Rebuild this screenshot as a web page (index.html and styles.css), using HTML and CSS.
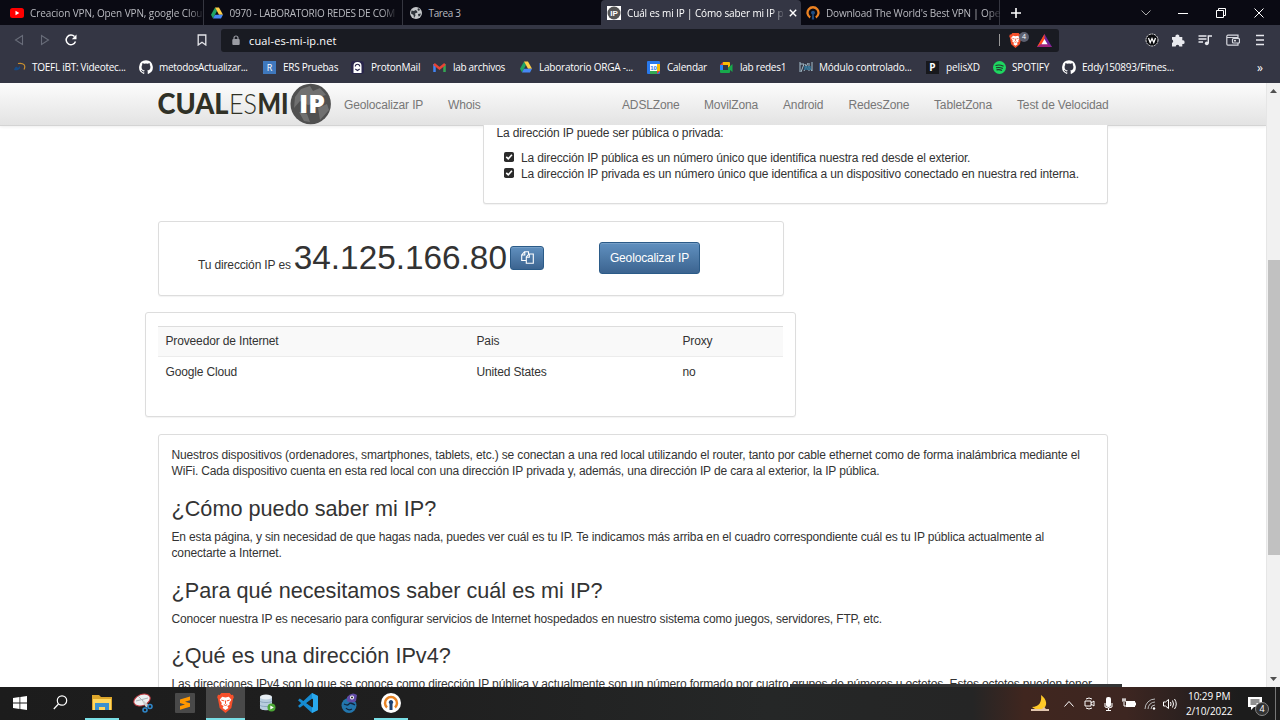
FILE: index.html
```html
<!DOCTYPE html>
<html lang="es">
<head>
<meta charset="utf-8">
<title>Cuál es mi IP</title>
<link rel="stylesheet" href="styles.css">
</head>
<body>
<svg width="0" height="0" class="defs">
  <defs>
    <symbol id="drive" viewBox="0 0 24 22"><path fill="#1fa463" d="M8 0 0 14.5 4 22 12 7z"/><path fill="#ffcf48" d="M8 0h8l8 14.5h-8z"/><path fill="#4688f4" d="M4 22h16l4-7.5H8z"/></symbol>
    <symbol id="github" viewBox="0 0 24 24"><path fill="#fff" d="M12 .5a12 12 0 0 0-3.8 23.3c.6.1.8-.2.8-.6v-2.100c-3.300.7-4-1.500-4-1.500-.6-1.400-1.400-1.800-1.400-1.800-1-.7.1-.7.1-.7 1.200.1 1.900 1.200 1.900 1.200 1.100 1.900 2.900 1.300 3.500 1 .1-.8.400-1.300.8-1.600-2.700-.3-5.500-1.300-5.500-5.900 0-1.300.5-2.400 1.200-3.200-.1-.3-.5-1.500.1-3.200 0 0 1-.3 3.300 1.200a11.500 11.500 0 0 1 6 0c2.300-1.500 3.300-1.200 3.300-1.200.7 1.700.2 2.900.1 3.200.8.800 1.200 1.900 1.200 3.200 0 4.600-2.800 5.600-5.500 5.900.400.400.8 1.100.8 2.200v3.300c0 .4.2.7.8.6A12 12 0 0 0 12 .5z"/></symbol>
    <symbol id="check" viewBox="0 0 11 11"><rect width="11" height="11" rx="2" fill="#2b2b2b"/><path d="M2.500 5.300 4.700 7.500 8.700 3" fill="none" stroke="#fff" stroke-width="1.800"/></symbol>
    <symbol id="brave" viewBox="0 0 20 24"><path fill="#f6502b" d="M5 0h10l2 2.500 2-.3 1 3-1 2.300-2 10.500L10 24 3 18 1 7.500 0 5.200l1-3 2 .3z"/><path fill="#fff" d="M6 4.500l4 .8 4-.8 3 3.500-2.500 4 .5 2-2.800 1.500L13.500 18 10 20.500 6.500 18l1.300-2.500L5 14l.5-2L3 8z"/><path stroke="#f6502b" stroke-width="1.200" fill="none" d="M5 8.500l3.500 1M15 8.500l-3.500 1M10 9v4M8 14l2 1 2-1"/></symbol>
  </defs>
</svg>
<div class="screen">
  <header class="tabs">
    <div class="tab"><svg class="i14" viewBox="0 0 14 14"><rect y="2" width="14" height="10" rx="2.500" fill="#f00"/><path d="M5.500 4.800v4.400L9.300 7z" fill="#fff"/></svg><span class="t1">Creacion VPN, Open VPN, google Clou</span></div>
    <div class="tab"><svg class="i12"><use href="#drive"/></svg><span class="t2">0970 - LABORATORIO REDES DE COM</span></div>
    <div class="tab"><svg class="i12" viewBox="0 0 12 12"><circle cx="6" cy="6" r="6" fill="#c4c6c9"/><path fill="#30343b" d="M1.500 3.500 4 4l1.500-1 1.500 1 .5 1.500L5 6.500l.5 2L4 11 3.500 8 1 6.500zM8 1l2 1.500L9 4 7.500 3zM8 7l3-.5L10 9 8.500 9.500z"/></svg><span class="t3">Tarea 3</span></div>
    <div class="tab active"><svg class="i14" viewBox="0 0 14 14"><rect width="14" height="14" fill="#fff"/><circle cx="7" cy="7" r="6.500" fill="#555"/><text x="7" y="10" text-anchor="middle" class="mini" fill="#fff">IP</text></svg><span class="t4">Cuál es mi IP | Cómo saber mi IP p</span><svg class="i8 close" viewBox="0 0 8 8"><path d="m.8.8 6.400 6.400m0-6.400L.8 7.200" stroke="#fff" stroke-width="1.400"/></svg></div>
    <div class="tab last"><svg class="i14" viewBox="0 0 14 14"><path d="M4.200 11.500A5.500 5.500 0 1 1 9.800 11.500" fill="none" stroke="#ec8222" stroke-width="2.300"/><path d="M5.800 13.500 6.300 8.500a2 2 0 1 1 1.400 0l.5 5z" fill="#1f4d83"/></svg><span class="t5">Download The World's Best VPN | Ope</span></div>
    <div class="wincontrols">
      <svg class="i10" viewBox="0 0 10 10"><path d="M5 0v10M0 5h10" stroke="#fff" stroke-width="1.600"/></svg>
      <svg class="i10" viewBox="0 0 10 10"><path d="m.5 2.500 4.500 4.500 4.500-4.500" fill="none" stroke="#aaa"/></svg>
      <svg class="i10" viewBox="0 0 10 10"><path d="M0 5.500h10" stroke="#fff"/></svg>
      <svg class="i10" viewBox="0 0 10 10"><path d="M.5 2.500h7v7h-7zM2.500 2V.5h7v7H8" fill="none" stroke="#fff"/></svg>
      <svg class="i10" viewBox="0 0 10 10"><path d="m.5.5 9 9m0-9-9 9" stroke="#fff"/></svg>
    </div>
  </header>
  <div class="toolbar">
    <div class="navbtns">
      <svg class="i12" viewBox="0 0 12 12"><path d="M9.500 1.500v9L2.500 6z" fill="none" stroke="#686c79" stroke-width="1.100"/></svg>
      <svg class="i12" viewBox="0 0 12 12"><path d="M2.500 1.500v9l7-4.500z" fill="none" stroke="#686c79" stroke-width="1.100"/></svg>
      <svg class="i12" viewBox="0 0 12 12"><path d="M10.500 7.500A4.800 4.800 0 1 1 9.500 2.600" fill="none" stroke="#fff" stroke-width="1.500"/><path d="M11.500.5v4.700H6.800z" fill="#fff"/></svg>
      <svg class="i12" viewBox="0 0 12 12"><path d="M2.200 1h7.600v10L6 8.300 2.200 11z" fill="none" stroke="#e4e5e9" stroke-width="1.300"/></svg>
    </div>
    <div class="address">
      <svg class="lock" viewBox="0 0 8 10"><path d="M2 5V3a2 2 0 0 1 4 0v2" fill="none" stroke="#9a9ca3" stroke-width="1.200"/><rect x=".3" y="4" width="7.400" height="6" rx="1" fill="#9a9ca3"/></svg>
      <span class="url">cual-es-mi-ip.net</span>
      <i class="bar"></i>
      <span class="shield"><svg width="13" height="15"><use href="#brave"/></svg><b>4</b></span>
      <svg class="bat" viewBox="0 0 15 13"><path d="M7.500 0 15 13H0z" fill="#70239c"/><path d="M7.500 0 0 13l7.500-5z" fill="#ff4a18"/><path d="M0 13h15L7.500 8z" fill="#a0237e"/><path d="m7.500 5 3 5.300h-6z" fill="#fff"/></svg>
    </div>
    <div class="exts">
      <svg class="i14" viewBox="0 0 14 14"><circle cx="7" cy="7" r="6" fill="#0b0c0f" stroke="#ddd" stroke-dasharray="2 .7"/><path d="m3.500 5 1.700 4.500L7 5.500l1.800 4L10.500 5" fill="none" stroke="#fff" stroke-width="1.300"/></svg>
      <svg class="i14" viewBox="0 0 14 14"><path fill="#e8e9ee" d="M1 4h3.500a2 2 0 1 1 3.800 0h3v3.300a1.900 1.900 0 1 1 0 3.700V13.500H8.300a1.800 1.800 0 0 0-3.600 0H1v-3.500a1.800 1.800 0 0 0 0-3.400z"/></svg>
      <svg class="i14" viewBox="0 0 14 14"><path d="M.5 3h8M.5 6h8M.5 9H5M10.300 10V3H14" fill="none" stroke="#e8e9ee" stroke-width="1.400"/><circle cx="8.800" cy="10.300" r="1.900" fill="#e8e9ee"/></svg>
      <svg class="i14" viewBox="0 0 14 14"><path d="M12 5V2.200H2A1.200 1.200 0 0 0 .8 3.500V11A1.200 1.200 0 0 0 2 12.200h10V10M1 4.500h11" fill="none" stroke="#d6d8df" stroke-width="1.200"/><rect x="6.500" y="5.500" width="7" height="4.500" rx="1" fill="none" stroke="#d6d8df" stroke-width="1.200"/><circle cx="9" cy="7.700" r=".9" fill="#fff"/></svg>
      <svg class="i11" viewBox="0 0 10 12"><path d="M1 1.500h8M1 6h8M1 10.500h8" stroke="#e8e9ee" stroke-width="1.500"/></svg>
    </div>
  </div>
  <nav class="bookmarks">
    <a><svg class="i12" viewBox="0 0 12 12"><path d="M4 2.500c6-1 8 2 6 6" fill="none" stroke="#c78e2f" stroke-width="1.200"/><path d="M0 9c1-4 3-4 4-2l2-2c1 3-2 5-6 4z" fill="#174a83"/></svg><span class="b1">TOEFL iBT: Videotec...</span></a>
    <a><svg class="i14"><use href="#github"/></svg><span class="b2">metodosActualizar...</span></a>
    <a><svg class="i13" viewBox="0 0 13 13"><rect width="13" height="13" fill="#3f78bd"/><text x="6.500" y="10" text-anchor="middle" class="micro" fill="#fff">R</text></svg><span class="b3">ERS Pruebas</span></a>
    <a><svg class="i13" viewBox="0 0 13 13"><rect width="13" height="13" rx="3" fill="#29264b"/><path d="M2.500 12V5a4 4 0 0 1 8 0v7z" fill="#fff"/><path d="M4.300 5.500a2.200 2.200 0 0 1 4.400 0M4.300 8l2.200 1.500L8.700 8" fill="none" stroke="#29264b" stroke-width="1.100"/></svg><span class="b4">ProtonMail</span></a>
    <a><svg class="i13" viewBox="0 0 13 13"><path d="M1.500 11V3" stroke="#4285f4" stroke-width="2.500"/><path d="M11.500 11V3" stroke="#34a853" stroke-width="2.500"/><path d="m1 3 5.500 4.500L12 3" fill="none" stroke="#ea4335" stroke-width="2.500"/></svg><span class="b5">lab archivos</span></a>
    <a><svg class="i12"><use href="#drive"/></svg><span class="b6">Laboratorio ORGA -...</span></a>
    <a><svg class="i13" viewBox="0 0 13 13"><rect width="13" height="13" rx="1" fill="#2979ec"/><path d="M10 3h3v7h-3z" fill="#fbbc04"/><path d="M3 10h7v3H3z" fill="#34a853"/><path d="M10 10h3l-3 3z" fill="#ea4335"/><path d="M3 3h7v7H3z" fill="#fff"/><text x="6.500" y="8.800" class="nano" text-anchor="middle" fill="#2979ec">10</text></svg><span class="b7">Calendar</span></a>
    <a><svg class="i13" viewBox="0 0 13 13"><path d="M3 1h6v3H3z" fill="#fbbc04"/><path d="M3 1v3H0z" fill="#ea4335"/><path d="M0 4h3v5H0z" fill="#2684fc"/><path d="M9 1q1 0 1 1v3L8 7V4H3V1z" fill="#fbbc04"/><path d="M0 9h8V7l4.500-4v8L10 9v2q0 1-1 1H1q-1 0-1-1z" fill="#17a94b"/></svg><span class="b8">lab redes1</span></a>
    <a><svg class="i14" viewBox="0 0 14 14"><path d="M1 2v10M1 4h4L2 12M6 4l3 6m0-7L5 11M10 3v8M13 2v9L9 6" fill="none" stroke="#a4bdca" stroke-width="1"/><path d="M5 6h7v4H5z" fill="#286c90" opacity=".8"/></svg><span class="b9">Módulo controlado...</span></a>
    <a><svg class="i13" viewBox="0 0 13 13"><rect width="13" height="13" fill="#17181c"/><text x="6.500" y="10.300" text-anchor="middle" class="small" fill="#fff">P</text></svg><span class="b10">pelisXD</span></a>
    <a><svg class="i13" viewBox="0 0 13 13"><circle cx="6.500" cy="6.500" r="6.500" fill="#1ed760"/><path d="M2.500 4.500q4-1.300 8 .8M3 6.800q3.500-1 6.800.7M3.500 8.900q3-.7 5.500.6" fill="none" stroke="#23352d" stroke-width="1.100"/></svg><span class="b11">SPOTIFY</span></a>
    <a><svg class="i14"><use href="#github"/></svg><span class="b12">Eddy150893/Fitnes...</span></a>
    <a class="more">»</a>
  </nav>
  <div class="viewport">
    <div class="page">
      <div class="sitebar">
        <svg class="logo" width="174" height="42" viewBox="0 0 174 42"><g fill="#303126"><text class="heavy" x="-.5" y="31" textLength="71" lengthAdjust="spacingAndGlyphs">CUAL</text><text class="thin" x="71" y="31" textLength="28" lengthAdjust="spacingAndGlyphs">ES</text><text class="heavy" x="99.500" y="31" textLength="31" lengthAdjust="spacingAndGlyphs">MI</text></g><circle cx="152.700" cy="21" r="20.200" fill="#505050"/><path d="M137 14l6-8 9-3 3 5 7-3 6 7-7 2-3 6-8 2-8-4-6 7zM141 29l8 2 3 8-6-1zM160 25l9-4 2 6-9 10z" fill="#707070"/><text class="ip" x="141" y="30" textLength="26" lengthAdjust="spacingAndGlyphs" fill="#fff">IP</text></svg>
        <a>Geolocalizar IP</a><a>Whois</a><a>ADSLZone</a><a>MovilZona</a><a>Android</a><a>RedesZone</a><a>TabletZona</a><a>Test de Velocidad</a>
      </div>
      <section class="card intro">
        <p>La dirección IP puede ser pública o privada:</p>
        <ul>
          <li><svg class="chk"><use href="#check"/></svg>La dirección IP pública es un número único que identifica nuestra red desde el exterior.</li>
          <li><svg class="chk"><use href="#check"/></svg>La dirección IP privada es un número único que identifica a un dispositivo conectado en nuestra red interna.</li>
        </ul>
      </section>
      <section class="card myip">
        <div class="ipline"><span>Tu dirección IP es</span><strong>34.125.166.80</strong></div>
        <button class="btn copy"><svg width="13" height="13" viewBox="0 0 13 13"><path d="M5 9.500H.700V4L3.500.7H7.500V3M3.800.7V4H.7M5.300 12.300V6L8 3h4.300v9.300zM8.300 3v3.300h-3" fill="none" stroke="#fff" stroke-width="1.100"/></svg></button>
        <button class="btn geo">Geolocalizar IP</button>
      </section>
      <section class="card provider">
        <div class="row head"><span>Proveedor de Internet</span><span>Pais</span><span>Proxy</span></div>
        <div class="row"><span>Google Cloud</span><span>United States</span><span>no</span></div>
      </section>
      <article class="card article">
        <p>Nuestros dispositivos (ordenadores, smartphones, tablets, etc.) se conectan a una red local utilizando el router, tanto por cable ethernet como de forma inalámbrica mediante el<br>WiFi. Cada dispositivo cuenta en esta red local con una dirección IP privada y, además, una dirección IP de cara al exterior, la IP pública.</p>
        <h2>¿Cómo puedo saber mi IP?</h2>
        <p>En esta página, y sin necesidad de que hagas nada, puedes ver cuál es tu IP. Te indicamos más arriba en el cuadro correspondiente cuál es tu IP pública actualmente al<br>conectarte a Internet.</p>
        <h2>¿Para qué necesitamos saber cuál es mi IP?</h2>
        <p>Conocer nuestra IP es necesario para configurar servicios de Internet hospedados en nuestro sistema como juegos, servidores, FTP, etc.</p>
        <h2>¿Qué es una dirección IPv4?</h2>
        <p>Las direcciones IPv4 son lo que se conoce como dirección IP pública y actualmente son un número formado por cuatro grupos de números u octetos. Estos octetos pueden tener</p>
      </article>
      <div class="bubble"></div>
    </div>
    <div class="scroll"><svg width="7" height="4" viewBox="0 0 7 4"><path d="M0 4 3.500 0 7 4z" fill="#505050"/></svg><i class="thumb"></i><svg width="7" height="4" viewBox="0 0 7 4"><path d="M0 0h7L3.500 4z" fill="#505050"/></svg></div>
  </div>
  <footer class="taskbar">
    <div class="app"><svg width="14" height="14" viewBox="0 0 14 14"><path d="M0 2 6.500 1v5.600H0zM7.300.9 14 0v6.600H7.300zM0 7.400h6.500V13L0 12zM7.300 7.400H14V14l-6.700-.9z" fill="#fff"/></svg></div>
    <div class="app"><svg width="15" height="15" viewBox="0 0 15 15"><circle cx="9" cy="5.500" r="4.700" fill="none" stroke="#fff" stroke-width="1.200"/><path d="M5.500 9 .8 14" stroke="#fff" stroke-width="1.200"/></svg></div>
    <div class="app open"><svg width="20" height="17" viewBox="0 0 20 17"><path d="M0 1h7l2 2h11v13H0z" fill="#dda62b"/><path d="M1 5h18v11H1z" fill="#ffd75e"/><path d="M3 16V9h14v7h-4v-3H7v3z" fill="#3a91cf"/></svg></div>
    <div class="app"><svg width="20" height="20" viewBox="0 0 20 20"><ellipse cx="9" cy="7" rx="8.500" ry="5.500" transform="rotate(-22 9 7)" fill="#edf0f2" stroke="#c63c42"/><path d="M3 8l12-3M5 3l8 8" stroke="#aab2b8"/><path d="m10 8 4 6m-2-4 3 3" stroke="#ccc" stroke-width="2"/><circle cx="12" cy="17" r="2" fill="none" stroke="#2f86c8" stroke-width="1.600"/><circle cx="17" cy="13.500" r="2" fill="none" stroke="#2f86c8" stroke-width="1.600"/></svg></div>
    <div class="app"><svg width="20" height="20" viewBox="0 0 20 20"><rect width="20" height="20" rx="1" fill="#494949"/><path d="m5 6.500 10-3v3.700L10 8.700l5 1.500v3.500l-10 3v-3.700l5-1.500-5-1.500z" fill="#ff9800"/></svg></div>
    <div class="app open current"><svg width="17" height="20"><use href="#brave"/></svg></div>
    <div class="app"><svg width="17" height="18" viewBox="0 0 17 18"><path d="M1 3v11c0 3 12 3 12 0V3z" fill="#b8cddd"/><ellipse cx="7" cy="3" rx="6" ry="2.500" fill="#e7eef4"/><path d="M1 7c0 2 12 2 12 0M1 11c0 2 12 2 12 0" fill="none" stroke="#8ca7bd"/><circle cx="12.500" cy="13.500" r="4" fill="#4ba635"/><path d="m11.300 11.500 3.500 2-3.500 2z" fill="#fff"/></svg></div>
    <div class="app"><svg width="20" height="20" viewBox="0 0 20 20"><path d="M14 0 20 3v14l-6 3L0 7.200l1.800-1.700L15 15V5L1.800 14.700 0 13z" fill="#168bd2"/><path d="m14 0 6 3v14l-6 3z" fill="#29a8ed"/><path d="M15 5.500v9L9 10z" fill="#1f1f1f"/></svg></div>
    <div class="app"><svg width="18" height="20" viewBox="0 0 18 20"><circle cx="8" cy="12.500" r="7.500" fill="#2376ad"/><path d="M6 4q5-6 10-2l-1 6q-4 3-9 0z" fill="#604ba5"/><circle cx="11" cy="4.500" r="2" fill="#fff"/><circle cx="11" cy="4.500" r="1" fill="#222"/><path d="M3 11q4 2 5 0t6 1M5 15q2 3 6 1" fill="none" stroke="#12243c" stroke-width="1.300"/></svg></div>
    <div class="app open"><svg width="20" height="20" viewBox="0 0 20 20"><circle cx="10" cy="10" r="10" fill="#fff"/><path d="M6 14.500A6 6 0 1 1 14 14.500" fill="none" stroke="#e98425" stroke-width="2.500"/><path d="M8.500 17V11a2.200 2.200 0 1 1 3 0v6z" fill="#1c3f70"/></svg></div>
    <div class="tray">
      <svg width="20" height="17" viewBox="0 0 20 17"><path d="M11 0c6 4 7 11 2 14C9 16 4 14 2 12c7 0 10-5 9-12z" fill="#ffc928"/><path d="M1 14h11l2-2 2 2h3v2H1z" fill="#e1c5ae"/></svg>
      <svg width="10" height="6" viewBox="0 0 10 6"><path d="m.5 5.500 4.500-5 4.500 5" fill="none" stroke="#fff"/></svg>
      <svg width="11" height="13" viewBox="0 0 11 13"><path d="M1 4h6v5H1zm6 2 3-2v5L7 7M2 2q3-2 6 0M2 11q3 2 6 0" fill="none" stroke="#fff"/></svg>
      <svg width="9" height="14" viewBox="0 0 9 14"><rect x="2" width="5" height="10" rx="2" fill="#fff"/><path d="M1 6v4q3.500 2 7 0V6M4.500 11v2.500M2 13.500h5" fill="none" stroke="#fff"/></svg>
      <svg width="14" height="11" viewBox="0 0 14 11"><rect x="4" y="3" width="9" height="6" fill="#fff"/><path d="M0 2h4M1 0v4M3 0v4M2 4v4h2M13.500 4.500v3" stroke="#fff" fill="none"/></svg>
      <svg width="12" height="12" viewBox="0 0 12 12"><path d="M1 11A10 10 0 0 1 11 1M4 11a7 7 0 0 1 7-7M7 11a4 4 0 0 1 4-4" fill="none" stroke="#bbb"/><circle cx="10" cy="10.500" r="1.200" fill="#fff"/></svg>
      <svg width="14" height="12" viewBox="0 0 14 12"><path d="M.5 4h2L5.500 1.500v9L2.500 8h-2zM7.500 4q1 2 0 4M9.500 2.500q2 3.500 0 7M11.500 1q3.500 5 0 10" fill="none" stroke="#fff"/></svg>
      <div class="clock"><span>10:29 PM</span><span>2/10/2022</span></div>
      <div class="notif"><svg width="14" height="13" viewBox="0 0 14 13"><path d="M0 0h14v10H6L3 13v-3H0z" fill="#fff"/><path d="M2.500 3h9M2.500 5h9M2.500 7h6" stroke="#222"/></svg><b>4</b></div>
      <i class="peek"></i>
    </div>
  </footer>
</div>
</body>
</html>
```
FILE: styles.css
```css
* { box-sizing: border-box; }
body { margin: 0; background: #fff; overflow: hidden; }
.defs { display: block; height: 0; }
svg { display: block; flex: none; }
.screen { width: 1280px; height: 720px; display: grid; grid-template-rows: 25px 30px 28px 604px 33px; overflow: hidden; font-family: "Open Sans", "Noto Sans", sans-serif; font-size: 10px; }
.i8 { width: 8px; height: 8px; }
.i10 { width: 10px; height: 10px; }
.i11 { width: 10px; height: 12px; }
.i12 { width: 12px; height: 12px; }
.i13 { width: 13px; height: 13px; }
.i14 { width: 14px; height: 14px; }
.mini { font: bold 8px "Liberation Sans", sans-serif; }
.micro { font: 9px "Open Sans", sans-serif; }
.nano { font: bold 6px "Liberation Sans", sans-serif; }
.small { font: bold 10px "Open Sans", sans-serif; }

.tabs { display: grid; grid-template-columns: 203.500px 199px 198.500px 200px 198.500px 1fr; background: #0a0a13; color: #b9bac0; }
.tab { display: flex; align-items: center; gap: 6px; padding-left: 7px; border-right: 1px solid #353640; white-space: nowrap; min-width: 0; }
.tab:first-child { padding-left: 10px; }
.tab:nth-child(3) { border-right: 0; gap: 7px; }
.tab span { -webkit-mask-image: linear-gradient(90deg, #000 92%, rgba(0, 0, 0, .15)); }
.tab .t3 { -webkit-mask-image: none; }
.tab.active { background: #343644; color: #fff; border: 0; border-radius: 4px 4px 0 0; padding-left: 6px; }
.tab.active span { flex: 0 0 154px; }
.tab.last { padding-left: 5px; }
.t1 { letter-spacing: -.1px; }
.t2 { letter-spacing: -.25px; margin-left: 1px; }
.t3 { letter-spacing: -.35px; }
.t4 { letter-spacing: -.13px; }
.t5 { letter-spacing: -.17px; }
.wincontrols { display: grid; grid-template-columns: 33px 131px 39px 37px 39px; justify-items: center; align-items: center; }
.wincontrols svg:nth-child(2) { margin-left: 96px; }

.toolbar { display: flex; align-items: center; background: #343644; }
.navbtns { width: 221px; display: grid; grid-template-columns: 26px 26px 131px 12px; padding-left: 13px; }
.address { width: 838px; height: 23px; border-radius: 3px; background: #191b22; color: #fff; display: flex; align-items: center; padding-left: 11px; }
.lock { width: 8px; height: 10px; }
.url { font-size: 11px; margin-left: 9px; width: 750px; letter-spacing: .14px; }
.bar { width: 1px; height: 12px; background: #999; }
.shield { position: relative; margin-left: 9px; width: 28px; }
.shield b { position: absolute; left: 10px; top: -1px; width: 10px; height: 10px; border-radius: 50%; background: #5c6070; font: 7px/10px "Open Sans", sans-serif; text-align: center; }
.bat { width: 15px; height: 13px; }
.exts { display: grid; grid-template-columns: 26px 27px 28px 29px 10px; padding-left: 86px; align-items: center; }

.bookmarks { display: grid; grid-template-columns: 125px 124px 88px 82px 87px 127px 73px 79px 127px 67px 69px 183px 30px; padding-left: 14px; background: #343644; color: #fff; align-items: center; padding-bottom: 4px; }
.bookmarks a { display: flex; align-items: center; gap: 6px; white-space: nowrap; }
.bookmarks a.more { padding-left: 12px; font-size: 12px; }
.b1 { letter-spacing: -.27px; }
.b2 { letter-spacing: -.32px; }
.b3 { letter-spacing: -.27px; margin-left: 1px; }
.b4 { letter-spacing: -.22px; margin-left: 1px; }
.b5 { letter-spacing: -.3px; margin-left: 1px; }
.b6 { letter-spacing: -.22px; margin-left: 1px; }
.b7, .b8 { letter-spacing: -.25px; margin-left: 1px; }
.b9 { letter-spacing: -.22px; }
.b10 { letter-spacing: -.1px; margin-left: 1px; }
.b11 { letter-spacing: -.15px; }
.b12 { letter-spacing: -.23px; }

.viewport { display: grid; grid-template-columns: 1266px 14px; min-height: 0; }
.page { position: relative; overflow: hidden; background: #fff; color: #333; font: 12px/16.670px "Liberation Sans", Arial, sans-serif; letter-spacing: -.145px; white-space: nowrap; }
.sitebar { height: 43px; border-bottom: 1px solid #d4d4d4; background: linear-gradient(#fcfcfc, #e3e3e3); display: grid; grid-template-columns: 186px 104px 174px 82px 79px 65.500px 85.500px 83px 120px; align-items: center; padding-left: 158px; color: #777; box-shadow: 0 1px 3px rgba(0, 0, 0, .07); }
.sitebar a { padding-top: 3px; }
.logo { align-self: start; letter-spacing: 0; }
.heavy { font: 900 28px Lato, sans-serif; }
.thin { font: 300 28px Lato, sans-serif; }
.ip { font: 900 25px "Open Sans", sans-serif; }
.card { border: 1px solid #ddd; border-radius: 3px; background: #fff; box-shadow: 0 1px 1px rgba(0, 0, 0, .05); }
p { margin: 0 0 8.330px; }
.intro { margin-left: 482.500px; width: 625.500px; height: 79.500px; border-top: 0; border-radius: 0 0 3px 3px; padding: 0 13px; }
.intro p { margin-top: -1.500px; }
ul { list-style: none; margin: 0; padding: 0; }
.intro li { display: flex; padding-left: 7.500px; gap: 7px; }
.chk { width: 10px; height: 10px; margin-top: 2px; }
.myip { margin: 16.500px 0 0 158px; width: 625.500px; height: 75px; display: flex; align-items: flex-start; padding-left: 39px; }
.ipline { display: flex; align-items: baseline; gap: 3px; width: 312px; line-height: 40px; padding-top: 16px; }
.ipline strong { font-size: 33.330px; font-weight: 400; letter-spacing: 0; }
.btn { padding: 0; border: 1px solid #2b5b88; background: linear-gradient(#6090bf, #3c6490); border-radius: 3px; color: #fff; font: 12px "Liberation Sans", Arial, sans-serif; letter-spacing: -.145px; box-shadow: inset 0 1px 0 rgba(255, 255, 255, .15); display: grid; place-items: center; }
.copy { width: 34px; height: 24px; margin-top: 24px; }
.geo { width: 101px; height: 32px; margin: 20px 0 0 55px; }
.provider { margin: 16.500px 0 0 145px; width: 650.500px; height: 105px; padding: 12.500px 12px; }
.row { display: grid; grid-template-columns: 311px 206px 1fr; height: 31px; align-items: center; padding-left: 7.500px; }
.head { background: #f9f9f9; border: solid #ddd; border-width: 1px 0; border-bottom-color: #ececec; }
.article { margin: 16.500px 0 0 158px; width: 950px; height: 300px; padding: 12px 12.500px; }
h2 { font-size: 21.670px; line-height: 23.830px; font-weight: 400; letter-spacing: 0; margin: 16.670px 0 8.330px; }
.bubble { position: absolute; left: 790px; bottom: 0; width: 332px; height: 3px; background: #333435; }
.scroll { background: #f1f1f1; display: flex; flex-direction: column; align-items: center; padding: 6px 0; border-left: 1px solid #e6e6e6; }
.thumb { width: 12px; height: 295px; margin: 167px 0 auto; background: #c1c1c1; }

.taskbar { display: grid; grid-template-columns: 40px repeat(9, 41.300px) 1fr; background: linear-gradient(90deg, #1c1c1c 0, #1f1f1f 32%, #252727 60%, #252525 76%, #40261f 80%, #3d2621 88%, #29201f 93%, #1c1c1c 97%); color: #fff; }
.app { display: grid; place-items: center; border-bottom: 2px solid transparent; }
.open { border-bottom-color: #79dfe6; margin: 0 3.500px; }
.current { background: #494949; margin: 0 1px; }
.tray { display: grid; grid-template-columns: 34px 24px 18px 20px 21px 21px 18px 60px 33px 1fr; padding-left: 611px; justify-items: center; align-items: center; }
.clock { display: grid; line-height: 15px; text-align: center; font-size: 10px; letter-spacing: -.1px; padding-left: 1px; }
.notif { position: relative; }
.notif b { position: absolute; left: 7px; top: 5px; width: 14px; height: 14px; border: 1px solid #888; border-radius: 50%; background: #333; font: 9px/12px "Open Sans", sans-serif; text-align: center; }
.peek { width: 1px; height: 33px; background: #777; }
```
